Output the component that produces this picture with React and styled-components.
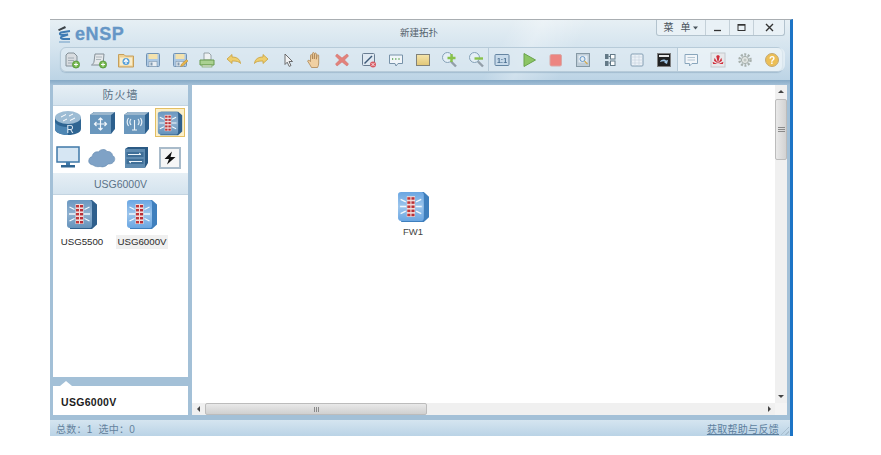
import * as React from "react";
import styled, { createGlobalStyle } from "styled-components";

const GlobalStyle = createGlobalStyle`
  html, body { margin: 0; padding: 0; background: #fff; }
  body { font-family: "Liberation Sans", "Noto Sans CJK SC", sans-serif; }
`;

const cjk = `"Liberation Sans", "Noto Sans CJK SC", sans-serif`;

const Page = styled.div`
  width: 881px;
  height: 455px;
  padding: 19px 0 0 50px;
  box-sizing: border-box;
  overflow: hidden;
`;

const Window = styled.div`
  width: 743px;
  height: 417px;
  display: flex;
  flex-direction: column;
  box-sizing: border-box;
  border-top: 1px solid #a9aeb2;
  border-right: 3px solid #1c74c6;
`;

const Header = styled.div`
  position: relative;
  height: 60px;
  flex: none;
  background:
    linear-gradient(118deg, transparent 60%, rgba(255, 255, 255, 0.28) 64%, transparent 70%),
    linear-gradient(180deg, #e6eff4 0%, #d3e3ee 50%, #bcd4e5 100%);
`;

const TitleRow = styled.div`
  height: 27px;
  display: flex;
  align-items: flex-start;
  justify-content: space-between;
  padding-right: 5px;
`;

const Logo = styled.div`
  display: flex;
  align-items: center;
  gap: 3px;
  padding: 4px 0 0 7px;
  color: #6596c6;
  font-size: 18px;
  font-weight: 700;
  line-height: 20px;
  letter-spacing: 0.6px;
  -webkit-text-stroke: 0.3px #6596c6;
`;

const Title = styled.div`
  position: absolute;
  left: 350px;
  top: 6px;
  font: 9.5px/14px ${cjk};
  color: #54616b;
`;

const WindowButtons = styled.div`
  display: flex;
  height: 15px;
  background: #e9f1f6;
  border: 1px solid #b3c3ce;
  border-top: 0;
  border-radius: 0 0 3px 3px;
`;

const WindowButton = styled.div`
  width: ${(p) => p.$w}px;
  display: flex;
  align-items: center;
  justify-content: center;
  gap: 1px;
  box-sizing: border-box;
  border-left: ${(p) => (p.$first ? "0" : "1px solid #c4d0d8")};
  font: 10px/14px ${cjk};
  color: #4a545c;
  letter-spacing: 2px;
`;

const Toolbar = styled.div`
  display: flex;
  height: 25px;
  margin-left: 10px;
  width: 723px;
  box-sizing: border-box;
  border: 1px solid #b7cbd9;
  border-radius: 6px;
  background: rgba(222, 234, 242, 0.75);
  box-shadow: 0 1px 1px rgba(120, 150, 175, 0.4);
`;

const ToolGroup = styled.div`
  display: flex;
  align-items: center;
  gap: 5px;
  height: 100%;
  padding: 0 ${(p) => p.$pad || 0}px;
  border-left: ${(p) => (p.$sep ? "1px solid #b7cbd9" : "0")};
  background: ${(p) => (p.$light ? "rgba(240,246,250,0.6)" : "transparent")};
  border-radius: ${(p) => (p.$light ? "0 6px 6px 0" : "0")};
`;

const Tool = styled.div`
  width: 22px;
  height: 22px;
  display: flex;
  align-items: center;
  justify-content: center;
  filter: blur(0.3px);
  opacity: 0.92;
`;

const Body = styled.div`
  flex: 1;
  display: flex;
  gap: 4px;
  min-height: 0;
  padding: 5px 3px;
  background: linear-gradient(180deg, #86a9c6 0, #a3c0d7 5px);
`;

const LeftColumn = styled.div`
  width: 135px;
  flex: none;
  display: flex;
  flex-direction: column;
  gap: 9px;
`;

const Palette = styled.div`
  flex: 1;
  background: #fff;
`;

const PaletteHead = styled.div`
  height: ${(p) => p.$h}px;
  display: flex;
  align-items: center;
  justify-content: center;
  background: linear-gradient(180deg, #e6eff5, #d4e3ee);
  border-bottom: 1px solid #c3d4e1;
  box-sizing: border-box;
  font: ${(p) => p.$fs}px/14px ${cjk};
  letter-spacing: ${(p) => p.$ls || 0}px;
  color: #5b7287;
`;

const DeviceGrid = styled.div`
  display: grid;
  grid-template-columns: repeat(4, 30px);
  grid-auto-rows: 29px;
  gap: 6px 4px;
  padding: 2px 0 1px;
`;

const DeviceCell = styled.div`
  display: flex;
  align-items: center;
  justify-content: center;
  box-sizing: border-box;
  border: 1px solid ${(p) => (p.$active ? "#e3bf63" : "transparent")};
  background: ${(p) => (p.$active ? "#fbefc9" : "transparent")};
  filter: blur(0.3px);
`;

const ModelRow = styled.div`
  display: flex;
  gap: 2px;
  padding-top: 3px;
`;

const Model = styled.div`
  width: 58px;
  display: flex;
  flex-direction: column;
  align-items: center;
  gap: 5px;
`;

const ModelName = styled.span`
  padding: 0 1px;
  font: 9.7px/14px "Liberation Sans", sans-serif;
  color: #2b2b2b;
  white-space: nowrap;
  background: ${(p) => (p.$active ? "#f0f0f0" : "transparent")};
`;

const Detail = styled.div`
  position: relative;
  height: 29px;
  flex: none;
  display: flex;
  align-items: center;
  padding: 2px 0 0 8px;
  box-sizing: border-box;
  background: #fff;
  font: 700 10.5px/14px "Liberation Sans", sans-serif;
  letter-spacing: 0.3px;
  color: #1c1c1c;

  &::before {
    content: "";
    position: absolute;
    left: 7px;
    top: -5px;
    border-left: 6px solid transparent;
    border-right: 6px solid transparent;
    border-bottom: 5px solid #fff;
  }
`;

const CanvasFrame = styled.div`
  width: 595px;
  flex: none;
  display: grid;
  grid-template-columns: 583px 12px;
  grid-template-rows: 318px 12px;
  background: #fff;
`;

const Canvas = styled.div`
  position: relative;
  background: #fff;
`;

const Node = styled.div`
  position: absolute;
  left: ${(p) => p.$x}px;
  top: ${(p) => p.$y}px;
  width: 50px;
  display: flex;
  flex-direction: column;
  align-items: center;
  gap: 3px;
  font: 9.5px/12px "Liberation Sans", sans-serif;
  color: #444;
`;

const VScroll = styled.div`
  display: flex;
  flex-direction: column;
  background: #f0f0f0;
`;

const HScroll = styled.div`
  display: flex;
  background: #f0f0f0;
`;

const Arrow = styled.div`
  flex: none;
  width: ${(p) => (p.$vertical ? "12px" : "13px")};
  height: ${(p) => (p.$vertical ? "14px" : "12px")};
  display: flex;
  align-items: center;
  justify-content: center;
`;

const VThumb = styled.div`
  height: 61px;
  flex: none;
  display: flex;
  align-items: center;
  justify-content: center;
  box-sizing: border-box;
  border: 1px solid #bcbcbc;
  border-radius: 2px;
  background: linear-gradient(90deg, #e9e9e9, #d2d2d2);
`;

const HThumb = styled.div`
  width: 222px;
  flex: none;
  display: flex;
  align-items: center;
  justify-content: center;
  box-sizing: border-box;
  border: 1px solid #bcbcbc;
  border-radius: 2px;
  background: linear-gradient(180deg, #e9e9e9, #d0d0d0);
`;

const ScrollSpace = styled.div`
  flex: 1;
`;

const Corner = styled.div`
  background: #f4f4f4;
`;

const StatusBar = styled.div`
  position: relative;
  height: 16px;
  flex: none;
  display: flex;
  align-items: center;
  justify-content: space-between;
  padding: 3px 11px 0 6px;
  box-sizing: border-box;
  background: linear-gradient(180deg, #d5e5f0, #bad3e6);
  font: 10px/13px ${cjk};
  color: #64829d;

  &::after {
    content: "";
    position: absolute;
    right: 1px;
    bottom: 1px;
    width: 8px;
    height: 8px;
    background: linear-gradient(135deg, transparent 45%, #a9bfd0 45%, #a9bfd0 55%, transparent 55%, transparent 72%, #a9bfd0 72%, #a9bfd0 82%, transparent 82%);
  }
`;

const StatusText = styled.span`
  letter-spacing: 0.25px;
`;

const HelpLink = styled.a`
  color: #5d7f9e;
  text-decoration: underline;
  letter-spacing: 0.3px;
`;

const FirewallSvg = styled.svg`
  filter: blur(0.3px);
`;

const Glyph = ({ children, s = 18, v = 18 }) => (
  <svg width={s} height={s} viewBox={`0 0 ${v} ${v}`} fill="none">
    {children}
  </svg>
);

const PlusBadge = () => (
  <>
    <circle cx="13" cy="13.5" r="3.6" fill="#6cb33f" stroke="#3f8a22" strokeWidth=".7" />
    <path d="M11 13.5h4M13 11.5v4" stroke="#fff" strokeWidth="1" />
  </>
);

const Floppy = ({ pen }) => (
  <>
    <rect x="2.5" y="2.5" width="13" height="13" rx="1" fill="#a9c6e2" stroke="#6a8cae" />
    <rect x="4.5" y="3" width="9" height="5" fill="#f6e2a8" />
    <rect x="5" y="10.5" width="8" height="5" fill="#e9eef3" stroke="#7a93aa" strokeWidth=".6" />
    <rect x="6.5" y="11.5" width="2" height="3" fill="#7a93aa" />
    {pen && <path d="M9.5 15.5l1-2.5 5-4.5 1.5 1.5-5 4.8z" fill="#eab23f" stroke="#a87a20" strokeWidth=".5" />}
  </>
);

const tools = {
  newTopo: (
    <Glyph>
      <path d="M5 2h6l3 3v10H3V4z" fill="#d8dcdf" stroke="#7d8890" />
      <path d="M5 7h6M5 9.5h6M5 12h4" stroke="#8f9aa2" strokeWidth=".8" />
      <PlusBadge />
    </Glyph>
  ),
  newLab: (
    <Glyph>
      <path d="M5 3h9l-1 11H1.500c1.500-1 2.500-2 2.600-4z" fill="#e6e9eb" stroke="#7d8890" />
      <path d="M6 6h6M6 8.500h5" stroke="#9aa4ab" strokeWidth=".8" />
      <PlusBadge />
    </Glyph>
  ),
  open: (
    <Glyph>
      <path d="M1.500 3.500h5.500l1.500 1.500h8v11h-15z" fill="#f0cf8b" stroke="#c49a50" />
      <rect x="3" y="6.500" width="12" height="8" fill="#fbeec9" />
      <circle cx="9" cy="10.500" r="3.500" fill="#4b9ad8" />
      <path d="M9 13V9M7 10.800L9 8.500l2 2.300" stroke="#fff" strokeWidth="1.200" />
    </Glyph>
  ),
  save: <Glyph><Floppy /></Glyph>,
  saveAs: <Glyph><Floppy pen /></Glyph>,
  print: (
    <Glyph>
      <path d="M6 2h5l2 2v5H6z" fill="#f1f3f4" stroke="#7f8a91" strokeWidth=".8" />
      <path d="M2 9h14v5H2z" fill="#a7d08a" stroke="#5f9440" />
      <rect x="4" y="14" width="10" height="2" fill="#dfe7d8" stroke="#5f9440" strokeWidth=".6" />
    </Glyph>
  ),
  undo: (
    <Glyph>
      <path d="M2 8l5-4.500V6c4.500 0 8 1.800 8.500 6.500C14 10.500 11.500 10 7 10v2.500z" fill="#f0cc63" stroke="#c79a2f" strokeWidth=".8" />
    </Glyph>
  ),
  redo: (
    <Glyph>
      <path d="M16 8l-5-4.500V6c-4.500 0-8 1.800-8.500 6.500C4 10.500 6.500 10 11 10v2.500z" fill="#f0cc63" stroke="#c79a2f" strokeWidth=".8" />
    </Glyph>
  ),
  pointer: (
    <Glyph>
      <path d="M6 3l7.500 7.500H10l2 4-1.800.9-2-4.200L6 13.500z" fill="#f4f4f4" stroke="#555" strokeWidth=".9" />
    </Glyph>
  ),
  hand: (
    <Glyph>
      <path d="M5.500 16.500C4.500 14 2.500 12 1.500 10c.6-1.200 2-.8 3 .6V4.500c0-1.200 1.500-1.200 1.700 0L6.500 8V2.500c0-1.300 1.700-1.300 1.800 0V8l.3-5c0-1.300 1.700-1.300 1.800 0v5.200l.7-3.700c.2-1.200 1.700-1 1.600.3V12c0 2-.5 3.200-1.200 4.500z" fill="#f3cf9c" stroke="#a87c45" strokeWidth=".8" />
    </Glyph>
  ),
  del: (
    <Glyph>
      <path d="M4 3l5 4 5-4 1.500 2-4 4 4 4-1.500 2-5-4-5 4-1.500-2 4-4-4-4z" fill="#e37a72" stroke="#cf5d55" strokeWidth=".5" />
    </Glyph>
  ),
  link: (
    <Glyph>
      <rect x="2.500" y="2.500" width="12" height="12" rx="1" fill="#dfe9f2" stroke="#60758a" />
      <path d="M4.500 12.500L12 5" stroke="#2e4d6d" strokeWidth="1.500" />
      <circle cx="13" cy="13.500" r="3" fill="#d8505a" />
      <path d="M11.500 12l3 3M14.500 12l-3 3" stroke="#fff" strokeWidth=".8" />
    </Glyph>
  ),
  note: (
    <Glyph>
      <path d="M2.500 4h13v8.500H11L9 15l-1-2.500H2.500z" fill="#f2f7fa" stroke="#6f8ba3" />
      <path d="M5 8h1.200M8.200 8h1.200M11.400 8h1.200" stroke="#4e9a3e" strokeWidth="1.300" />
    </Glyph>
  ),
  rect: (
    <Glyph>
      <defs>
        <linearGradient id="rectFill" x1="0" y1="0" x2="0" y2="1">
          <stop offset="0" stopColor="#f7e5a6" />
          <stop offset="1" stopColor="#e3c46d" />
        </linearGradient>
      </defs>
      <rect x="2.500" y="3.500" width="13" height="11" fill="url(#rectFill)" stroke="#7a7a70" />
    </Glyph>
  ),
  zoomIn: (
    <Glyph>
      <circle cx="6.500" cy="6.500" r="5" fill="#e6f0f7" stroke="#7e9bb2" />
      <path d="M10 10.500l5 5" stroke="#8e9aa3" strokeWidth="2.400" />
      <path d="M6.500 7h8M10.500 3v8" stroke="#82bf3c" strokeWidth="2.400" />
    </Glyph>
  ),
  zoomOut: (
    <Glyph>
      <circle cx="6.500" cy="6.500" r="5" fill="#e6f0f7" stroke="#7e9bb2" />
      <path d="M10 10.500l5 5" stroke="#8e9aa3" strokeWidth="2.400" />
      <path d="M6.500 7.500h8.500" stroke="#82bf3c" strokeWidth="2.400" />
    </Glyph>
  ),
  fit: (
    <Glyph>
      <rect x="2" y="3.500" width="14" height="11" rx="1" fill="#c6d9ea" stroke="#5b7d9c" />
      <text x="9" y="12" fontSize="7" fontFamily="Liberation Sans" fontWeight="700" textAnchor="middle" fill="#3f6689">1:1</text>
    </Glyph>
  ),
  play: (
    <Glyph>
      <path d="M4 2.500L15.500 9 4 15.500z" fill="#86c25a" stroke="#5f9d3d" />
    </Glyph>
  ),
  stop: (
    <Glyph>
      <rect x="3" y="3.500" width="11.500" height="11.500" rx="1.500" fill="#ee7d78" stroke="#d8a3a0" />
    </Glyph>
  ),
  capture: (
    <Glyph>
      <rect x="2.500" y="2.500" width="13" height="13" fill="#bccbd6" stroke="#7f939f" />
      <rect x="4.500" y="4.500" width="9" height="7" fill="#e5eef4" />
      <circle cx="8.500" cy="8" r="2.500" stroke="#5f93c4" />
      <path d="M10.500 10l3 3" stroke="#d0a545" strokeWidth="1.300" />
    </Glyph>
  ),
  tree: (
    <Glyph>
      <rect x="4" y="3" width="3.500" height="5" fill="#59707f" />
      <rect x="4" y="10" width="3.500" height="5" fill="#59707f" />
      <rect x="9.500" y="3.500" width="4.500" height="4.500" fill="#fff" stroke="#59707f" />
      <rect x="9.500" y="10" width="4.500" height="4.500" fill="#fff" stroke="#59707f" />
      <path d="M7.500 5.500h2M7.500 12h2" stroke="#59707f" />
    </Glyph>
  ),
  grid: (
    <Glyph>
      <rect x="3" y="3" width="12" height="12" rx="1" fill="#eef4f8" stroke="#7d97ad" />
      <path d="M3 6h12M3 9h12M3 12h12M7 3v12M11 3v12" stroke="#c3d2de" strokeWidth=".6" />
    </Glyph>
  ),
  terminal: (
    <Glyph>
      <rect x="2.500" y="2.500" width="13" height="13" fill="#111" stroke="#777" />
      <rect x="4" y="4" width="10" height="2" fill="#e6e6e6" />
      <path d="M5 11c1-3 5-3 6-1.500l2-.5-1 4-3-1.500 1.300-.5c-1-1-3-1-5 0z" fill="#9cc4e6" />
    </Glyph>
  ),
  chat: (
    <Glyph>
      <path d="M3 3.500h12.500v9H10L7.500 15v-2.500H3z" fill="#f3f7fa" stroke="#82a0b8" />
      <path d="M5.500 6.500h7.500M5.500 9h7.500" stroke="#9eb5c7" strokeWidth=".8" />
    </Glyph>
  ),
  huawei: (
    <Glyph>
      <rect x="2" y="2" width="14" height="14" fill="#e8e8ea" stroke="#c2c6ca" />
      <path d="M9 12.500L5 9.800l.6-3zM9 12.500l4-2.700-.6-3zM9 12.500L7.200 5l1.800-1zM9 12.500L10.800 5 9 4zM8.300 13L3.600 10.800l.5 2.200zM9.700 13l4.700-2.200-.5 2.200z" fill="#cf1f2d" />
    </Glyph>
  ),
  gear: (
    <Glyph>
      <circle cx="9" cy="9" r="5.500" stroke="#a2aba7" strokeWidth="2.500" strokeDasharray="2 1.500" />
      <circle cx="9" cy="9" r="3.600" fill="#e3e6e3" stroke="#9ea8a3" />
      <circle cx="9" cy="9" r="1.500" fill="#bcc4bf" />
    </Glyph>
  ),
  help: (
    <Glyph>
      <circle cx="9" cy="9" r="6.500" fill="#edbb49" stroke="#bfa36a" />
      <text x="9" y="12.500" fontSize="10" fontWeight="700" fontFamily="Liberation Sans" textAnchor="middle" fill="#fff">?</text>
    </Glyph>
  ),
};

const FirewallIcon = ({ size = 32, bright, id }) => (
  <FirewallSvg width={size} height={size} viewBox="0 0 32 32" fill="none">
    <defs>
      <linearGradient id={id} x1="0" y1="0" x2="0" y2="1">
        <stop offset="0" stopColor={bright ? "#6aa6e2" : "#6a97c0"} />
        <stop offset=".5" stopColor={bright ? "#9cc5ec" : "#8fb0cf"} />
        <stop offset="1" stopColor={bright ? "#6aa6e2" : "#6492bb"} />
      </linearGradient>
    </defs>
    <path d="M5 2h21l5 4.500v20L26 31H4z" fill={bright ? "#3f7fbd" : "#2f5f8c"} />
    <path d="M1 4.500Q1 2 4 2h20q2 0 2 2.500V27q0 3-2 3H4q-3 0-3-3z" fill={`url(#${id})`} />
    <path d="M3.500 9l5 2.500M3 16h6M3.500 23l5-2.500M23.500 9l-5 2.500M24 16h-6M23.500 23l-5-2.500" stroke="#f2f8fc" strokeWidth="1.300" />
    <rect x="9.500" y="6" width="8" height="20" fill="#f0dcda" />
    {[7, 11, 15, 19, 23].map((y) => (
      <g key={y}>
        <rect x="10" y={y} width="3" height="2.400" fill="#c23638" />
        <rect x="14" y={y} width="3" height="2.400" fill="#b93038" />
      </g>
    ))}
  </FirewallSvg>
);

const RouterIcon = () => (
  <svg width="28" height="26" viewBox="0 0 28 26" fill="none">
    <path d="M1 7v12c0 3.500 6 6 13 6s13-2.500 13-6V7z" fill="#2f6592" />
    <path d="M1 12v7c0 3.500 6 6 13 6v-8C8 17 2 15 1 12z" fill="#4e86b3" />
    <ellipse cx="14" cy="7.500" rx="13" ry="6.500" fill="#9dbcd4" />
    <path d="M7 7l5-2.500M21 8l-5 2.500M9 11l4-2M19 4l-4 2" stroke="#fff" strokeWidth="1" />
    <text x="12.500" y="23" fontSize="10" fontFamily="Liberation Sans" fill="#dfeaf4">R</text>
  </svg>
);

const SwitchIcon = ({ kind }) => (
  <svg width="27" height="24" viewBox="0 0 27 24" fill="none">
    <path d="M1 4l4-3h21v17l-4 5H1z" fill="#2c5f8d" />
    <path d="M1 4l4-3h21l-4 3z" fill="#9ab6cd" />
    <rect x="1" y="4" width="21" height="19" fill="#6a97bd" />
    {kind === "wlan" ? (
      <path d="M11.500 9v10M9 19h5M8 8c-1.500 2-1.500 4 0 6M15 8c1.500 2 1.500 4 0 6M5.500 7c-2 3-2 5 0 8M17.500 7c2 3 2 5 0 8" stroke="#eef5fa" strokeWidth="1.100" />
    ) : (
      <path d="M11.500 7v12M5.500 13h12M9.500 9l2-2 2 2M9.500 17l2 2 2-2M7.500 11l-2 2 2 2M15.500 11l2 2-2 2" stroke="#f2f7fb" strokeWidth="1.200" />
    )}
  </svg>
);

const MonitorIcon = () => (
  <svg width="24" height="23" viewBox="0 0 24 23" fill="none">
    <rect x="1" y="1" width="22" height="15" fill="#d6e6f3" stroke="#3f78a8" strokeWidth="1.500" />
    <path d="M10 16h4v3h-4z" fill="#3f78a8" />
    <rect x="5" y="19" width="14" height="2.500" fill="#2f6592" />
  </svg>
);

const CloudIcon = () => (
  <svg width="28" height="22" viewBox="0 0 28 22" fill="none">
    <path d="M5 18c-3.500-.5-5-3-4-5.500.3-1.500 1.500-2.500 3-2.700C4.500 6 8 4 10.500 5 12 2 17.500 1.500 19 4.500c3-.5 5.500 1.500 5.500 4 2.500 1 3 4.500 1 6.500-1.500 2-4 2-5.500 2-2 2.500-5 3.500-8 2.500-2.500.5-5 .2-7-1.500z" fill="#7fa2c6" stroke="#5f86ad" strokeWidth=".6" />
  </svg>
);

const RackIcon = () => (
  <svg width="25" height="23" viewBox="0 0 25 23" fill="none">
    <path d="M1 3l3-2h20v16l-3 5H1z" fill="#2b5a84" />
    <rect x="1" y="3" width="20" height="19" fill="#5f8bb0" />
    <rect x="2.500" y="6" width="17" height="5" fill="#3f6f98" />
    <rect x="2.500" y="13" width="17" height="5" fill="#3f6f98" />
    <path d="M4 8.500h13l-2-1.500M18 15.500H5l2 1.500" stroke="#eef5fa" strokeWidth="1" />
  </svg>
);

const LinkIcon = () => (
  <svg width="22" height="22" viewBox="0 0 22 22" fill="none">
    <rect x="1" y="1" width="20" height="20" fill="#f6f6f6" stroke="#a9bbca" strokeWidth="2" />
    <path d="M13 4.500L5.500 12h4.500l-2 5.500L16.500 10h-5z" fill="#111" />
  </svg>
);

const GripLines = ({ vertical }) => (
  <svg width="7" height="7" viewBox="0 0 7 7">
    {[1, 3, 5].map((p) =>
      vertical ? (
        <path key={p} d={`M0 ${p + 0.5}h7`} stroke="#8a8a8a" />
      ) : (
        <path key={p} d={`M${p + 0.5} 1v5`} stroke="#8a8a8a" />
      )
    )}
  </svg>
);

const Tri = ({ d }) => {
  const paths = {
    up: "M0 4L3 1l3 3z",
    down: "M0 2l3 3 3-3z",
    left: "M4 0L1 3l3 3z",
    right: "M2 0l3 3-3 3z",
  };
  return (
    <svg width="6" height="6" viewBox="0 0 6 6">
      <path d={paths[d]} fill="#444" />
    </svg>
  );
};

const LogoMark = () => (
  <svg width="15" height="18" viewBox="0 0 15 18" fill="none">
    <path d="M1 4.500l7-3.500 1 2-7 3z" fill="#3c4348" />
    <path d="M13 6L4 7.500c-2 1-1 2.500 1 2.500l6-.5-6 2c-2 1-1 2.500 1 2.500h7" stroke="#3f7bb4" strokeWidth="2.200" fill="none" />
    <path d="M2 17h11" stroke="#7fa8cc" strokeWidth="1.200" />
  </svg>
);

const groupOne = ["newTopo", "newLab", "open", "save", "saveAs", "print", "undo", "redo", "pointer", "hand", "del", "link", "note", "rect", "zoomIn", "zoomOut"];
const groupTwo = ["fit", "play", "stop", "capture", "tree", "grid", "terminal"];
const groupThree = ["chat", "huawei", "gear", "help"];

const App = () => (
  <Page>
    <GlobalStyle />
    <Window>
      <Header>
        <TitleRow>
          <Logo>
            <LogoMark />
            eNSP
          </Logo>
          <WindowButtons>
            <WindowButton $w={48} $first>
              菜 单
              <svg width="5" height="4"><path d="M0 .5h5L2.500 3.500z" fill="#4a545c" /></svg>
            </WindowButton>
            <WindowButton $w={24}>
              <svg width="9" height="9"><path d="M1 7.500h7" stroke="#333" strokeWidth="1.300" /></svg>
            </WindowButton>
            <WindowButton $w={24}>
              <svg width="9" height="9"><rect x="1" y="1.500" width="7" height="6" fill="none" stroke="#333" /><path d="M1 2h7" stroke="#333" strokeWidth="1.400" /></svg>
            </WindowButton>
            <WindowButton $w={31}>
              <svg width="9" height="9"><path d="M1 1l7 7M8 1L1 8" stroke="#333" strokeWidth="1.400" /></svg>
            </WindowButton>
          </WindowButtons>
        </TitleRow>
        <Title>新建拓扑</Title>
        <Toolbar>
          <ToolGroup>{groupOne.map((k) => <Tool key={k}>{tools[k]}</Tool>)}</ToolGroup>
          <ToolGroup $sep $pad={2}>{groupTwo.map((k) => <Tool key={k}>{tools[k]}</Tool>)}</ToolGroup>
          <ToolGroup $sep $light $pad={2}>{groupThree.map((k) => <Tool key={k}>{tools[k]}</Tool>)}</ToolGroup>
        </Toolbar>
      </Header>
      <Body>
        <LeftColumn>
          <Palette>
            <PaletteHead $h={21} $fs={11} $ls={1}>防火墙</PaletteHead>
            <DeviceGrid>
              <DeviceCell><RouterIcon /></DeviceCell>
              <DeviceCell><SwitchIcon /></DeviceCell>
              <DeviceCell><SwitchIcon kind="wlan" /></DeviceCell>
              <DeviceCell $active><FirewallIcon size={26} id="fwCell" /></DeviceCell>
              <DeviceCell><MonitorIcon /></DeviceCell>
              <DeviceCell><CloudIcon /></DeviceCell>
              <DeviceCell><RackIcon /></DeviceCell>
              <DeviceCell><LinkIcon /></DeviceCell>
            </DeviceGrid>
            <PaletteHead $h={22} $fs={10.5}>USG6000V</PaletteHead>
            <ModelRow>
              <Model>
                <FirewallIcon id="fw5500" />
                <ModelName>USG5500</ModelName>
              </Model>
              <Model>
                <FirewallIcon bright id="fw6000" />
                <ModelName $active>USG6000V</ModelName>
              </Model>
            </ModelRow>
          </Palette>
          <Detail>USG6000V</Detail>
        </LeftColumn>
        <CanvasFrame>
          <Canvas>
            <Node $x={196} $y={105}>
              <FirewallIcon size={33} bright id="fwNode" />
              FW1
            </Node>
          </Canvas>
          <VScroll>
            <Arrow $vertical><Tri d="up" /></Arrow>
            <VThumb><GripLines vertical /></VThumb>
            <ScrollSpace />
            <Arrow $vertical><Tri d="down" /></Arrow>
          </VScroll>
          <HScroll>
            <Arrow><Tri d="left" /></Arrow>
            <HThumb><GripLines /></HThumb>
            <ScrollSpace />
            <Arrow><Tri d="right" /></Arrow>
          </HScroll>
          <Corner />
        </CanvasFrame>
      </Body>
      <StatusBar>
        <StatusText>总数：1&nbsp;&nbsp;选中：0</StatusText>
        <HelpLink>获取帮助与反馈</HelpLink>
      </StatusBar>
    </Window>
  </Page>
);

export default App;
